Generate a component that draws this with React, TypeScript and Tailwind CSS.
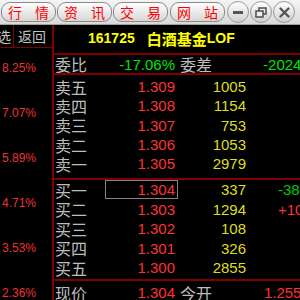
import React from 'react'

const sells = [
  { label: '卖五', price: '1.309', vol: '1005' },
  { label: '卖四', price: '1.308', vol: '1154' },
  { label: '卖三', price: '1.307', vol: '753' },
  { label: '卖二', price: '1.306', vol: '1053' },
  { label: '卖一', price: '1.305', vol: '2979' },
]

const buys = [
  { label: '买一', price: '1.304', vol: '337', chg: '-38', up: false, boxed: true },
  { label: '买二', price: '1.303', vol: '1294', chg: '+10', up: true },
  { label: '买三', price: '1.302', vol: '108' },
  { label: '买四', price: '1.301', vol: '326' },
  { label: '买五', price: '1.300', vol: '2855' },
]

const pcts = ['8.25%', '7.07%', '5.89%', '4.71%', '3.53%', '2.36%']

const cjk = { fontFamily: '"Noto Sans CJK SC", sans-serif' }

function TabButton({ a, b }: { a: string; b: string }) {
  return (
    <div
      className="w-[55px] h-[20px] rounded-[9px] border border-[#8a8a8a] bg-gradient-to-b from-white to-[#d6d6d6] flex items-center justify-center gap-[13px] text-[14px] leading-none text-[#ff0000]"
      style={cjk}
    >
      <span>{a}</span>
      <span>{b}</span>
    </div>
  )
}

function RoundButton({ children }: { children: React.ReactNode }) {
  return (
    <div className="w-[22px] h-[22px] rounded-full border border-[#9a9a9a] bg-gradient-to-b from-white to-[#cfcfcf] flex items-center justify-center">
      {children}
    </div>
  )
}

function Row({ label, price, vol, extra, boxed, h }: { label: string; price: string; vol: string; extra?: React.ReactNode; boxed?: boolean; h: string }) {
  return (
    <div className={`flex items-center ${h}`}>
      <span className="w-[51px] pl-[1px] text-[16px] leading-none text-[#bdbdbd]" style={cjk}>{label}</span>
      <span className={`w-[73px] h-[19px] flex items-center justify-end pr-[2px] border ${boxed ? 'border-[#858585]' : 'border-transparent'} text-[#ff3232]`}>{price}</span>
      <span className="w-[68px] text-right text-[#dede1e]">{vol}</span>
      <span className="flex-1 pl-[32px] whitespace-nowrap overflow-hidden">{extra}</span>
    </div>
  )
}

export default function App() {
  return (
    <div className="w-[300px] h-[300px] overflow-hidden bg-black flex flex-col" style={{ fontFamily: '"Liberation Sans", Arial, sans-serif' }}>
      {/* top toolbar */}
      <div className="h-[25px] shrink-0 flex items-center pl-[1px] gap-[1px] bg-gradient-to-b from-[#f4f4f4] to-[#d9d9d9] border-b border-[#a0a0a0]">
        <TabButton a="行" b="情" />
        <TabButton a="资" b="讯" />
        <TabButton a="交" b="易" />
        <div className="w-[0px]" />
        <TabButton a="网" b="站" />
        <div className="flex items-center gap-[1px] ml-[1px]">
          <RoundButton>
            <div className="w-[10px] h-[3px] bg-[#555]" />
          </RoundButton>
          <RoundButton>
            <svg width="12" height="11" viewBox="0 0 12 11">
              <rect x="4" y="1" width="7" height="6" fill="none" stroke="#555" strokeWidth="1.6" />
              <rect x="1" y="4" width="7" height="6" fill="#eee" stroke="#555" strokeWidth="1.6" />
            </svg>
          </RoundButton>
          <RoundButton>
            <svg width="11" height="11" viewBox="0 0 11 11">
              <path d="M1.5 1.5L9.5 9.5M9.5 1.5L1.5 9.5" stroke="#555" strokeWidth="2.4" strokeLinecap="round" />
            </svg>
          </RoundButton>
        </div>
      </div>

      <div className="flex flex-1 min-h-0">
        {/* left column */}
        <div className="w-[54px] shrink-0 border-r-2 border-[#800000] flex flex-col">
          <div className="h-[25px] flex border-b border-[#800000] text-[14px] leading-none text-[#c4c4c4]" style={cjk}>
            <div className="w-[14px] border-r border-[#800000] overflow-hidden flex items-center">
              <span className="-ml-[3px]">选</span>
            </div>
            <div className="flex-1 flex items-center pl-[4px]">返回</div>
          </div>
          <div className="flex flex-col gap-[31px] pt-[13px] pl-[2px] text-[12px] leading-[14px] text-[#ee3333]">
            {pcts.map(p => (
              <span key={p}>{p}</span>
            ))}
          </div>
        </div>

        {/* right panel */}
        <div className="flex-1 flex flex-col text-[15px] leading-none">
          <div className="h-[30px] shrink-0 border-b-2 border-[#800000] flex items-center pl-[34px] pb-[2px] font-bold text-[#ffff00]">
            <span className="text-[14px]">161725</span>
            <span className="ml-[12px] text-[15px]" style={cjk}>白酒基金</span>
            <span className="text-[14px]">LOF</span>
          </div>

          <div className="h-[20px] shrink-0 border-b-2 border-[#800000] flex items-center">
            <span className="w-[51px] pl-[1px] text-[16px] leading-none text-[#bdbdbd]" style={cjk}>委比</span>
            <span className="w-[73px] text-right pr-[3px] text-[#00e600]">-17.06%</span>
            <span className="flex-1 flex items-center justify-between pl-[2px] pr-[2px]">
              <span className="text-[16px] text-[#bdbdbd]" style={cjk}>委差</span>
              <span className="text-[#00e600]">-2024</span>
            </span>
          </div>

          <div className="h-[105px] shrink-0 border-b-2 border-[#800000] pt-[2px]">
            {sells.map(r => (
              <Row key={r.label} h="h-[19.3px]" label={r.label} price={r.price} vol={r.vol} />
            ))}
          </div>

          <div className="h-[101px] shrink-0 border-b-2 border-[#800000]">
            {buys.map(r => (
              <Row
                key={r.label}
                h="h-[19.5px]"
                label={r.label}
                price={r.price}
                vol={r.vol}
                boxed={r.boxed}
                extra={r.chg ? <span className={r.up ? 'text-[#ff3232]' : 'text-[#00c800]'}>{r.chg}</span> : null}
              />
            ))}
          </div>

          <div className="h-[20px] shrink-0 flex items-center pt-[3px]">
            <span className="w-[51px] pl-[1px] text-[16px] leading-none text-[#bdbdbd]" style={cjk}>现价</span>
            <span className="w-[73px] text-right pr-[3px] text-[#ff3232]">1.304</span>
            <span className="flex-1 flex items-center justify-between pl-[2px] pr-[2px]">
              <span className="text-[16px] text-[#bdbdbd]" style={cjk}>今开</span>
              <span className="text-[#ff3232]">1.255</span>
            </span>
          </div>
        </div>
      </div>
    </div>
  )
}
